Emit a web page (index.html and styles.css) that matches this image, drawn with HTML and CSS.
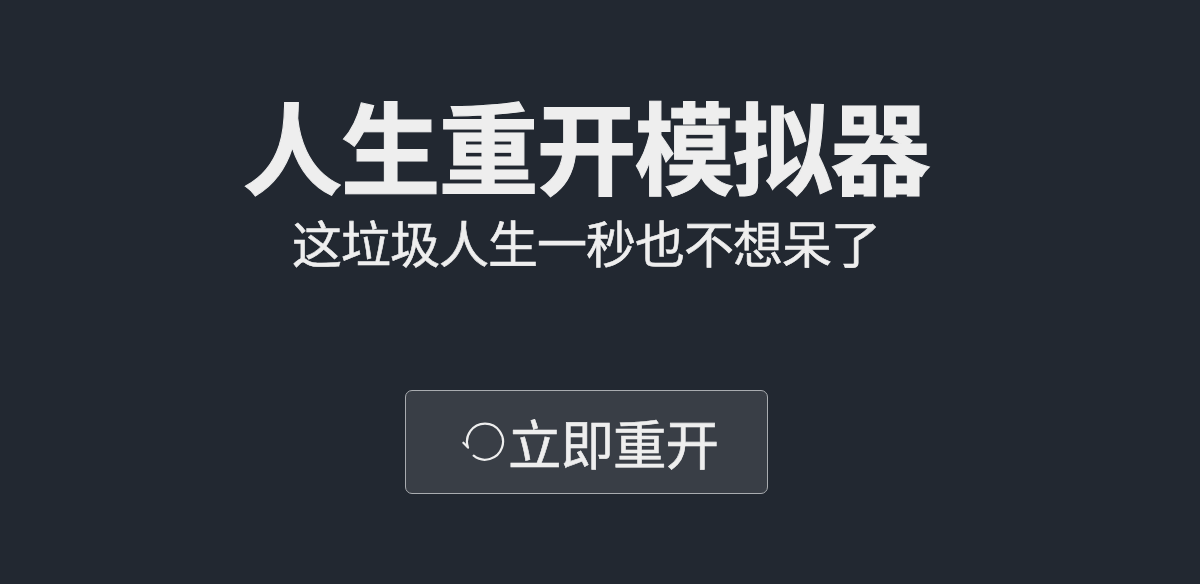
FILE: index.html
```
<!DOCTYPE html>
<html lang="zh-CN">

<head>
    <meta charset="UTF-8">
    <meta name="viewport" content="width=device-width, initial-scale=1.0">
    <title>人生重开模拟器</title>
    <link rel="stylesheet" href="styles.css">
</head>

<body>
    <main class="home">
        <h1 class="title">人生重开模拟器</h1>
        <p class="subtitle">这垃圾人生一秒也不想呆了</p>
        <button class="restart-button" type="button">
            <svg class="restart-icon" viewBox="0 0 46 46" aria-hidden="true">
                <path d="M1.4 23.7 L6 28.6 A18 18 0 1 1 11.7 36.7" />
            </svg>
            <span>立即重开</span>
        </button>
    </main>
</body>

</html>
```

FILE: styles.css
```
* {
    box-sizing: border-box;
}

body {
    margin: 0;
    height: 584px;
    background-color: #222831;
    color: #eeeeee;
    font-family: "Noto Sans CJK SC", sans-serif;
}

.home {
    display: flex;
    flex-direction: column;
    align-items: center;
    width: 1173px;
    padding-top: 89px;
}

.title {
    margin: 0;
    padding-right: 2px;
    font-size: 100px;
    line-height: 110px;
    font-weight: bold;
    letter-spacing: -2px;
    -webkit-text-stroke: 1px #eeeeee;
}

.subtitle {
    margin: 14px 0 0;
    padding-right: 1px;
    font-size: 50px;
    line-height: 56px;
    letter-spacing: -1px;
    -webkit-text-stroke: 0.6px #eeeeee;
}

.restart-button {
    display: flex;
    align-items: center;
    width: 363px;
    height: 104px;
    margin-top: 121px;
    padding: 0 0 0 56px;
    background-color: #393e46;
    color: #eeeeee;
    border: 1px solid #a9acb0;
    border-radius: 7px;
    font-family: inherit;
    font-size: 53.5px;
    line-height: 60px;
    letter-spacing: -1px;
    -webkit-text-stroke: 0.6px #eeeeee;
    cursor: pointer;
}

.restart-icon {
    flex-shrink: 0;
    width: 46px;
    height: 46px;
    fill: none;
    stroke: #eeeeee;
    stroke-width: 2.2;
    stroke-linecap: round;
    stroke-linejoin: round;
}
```
